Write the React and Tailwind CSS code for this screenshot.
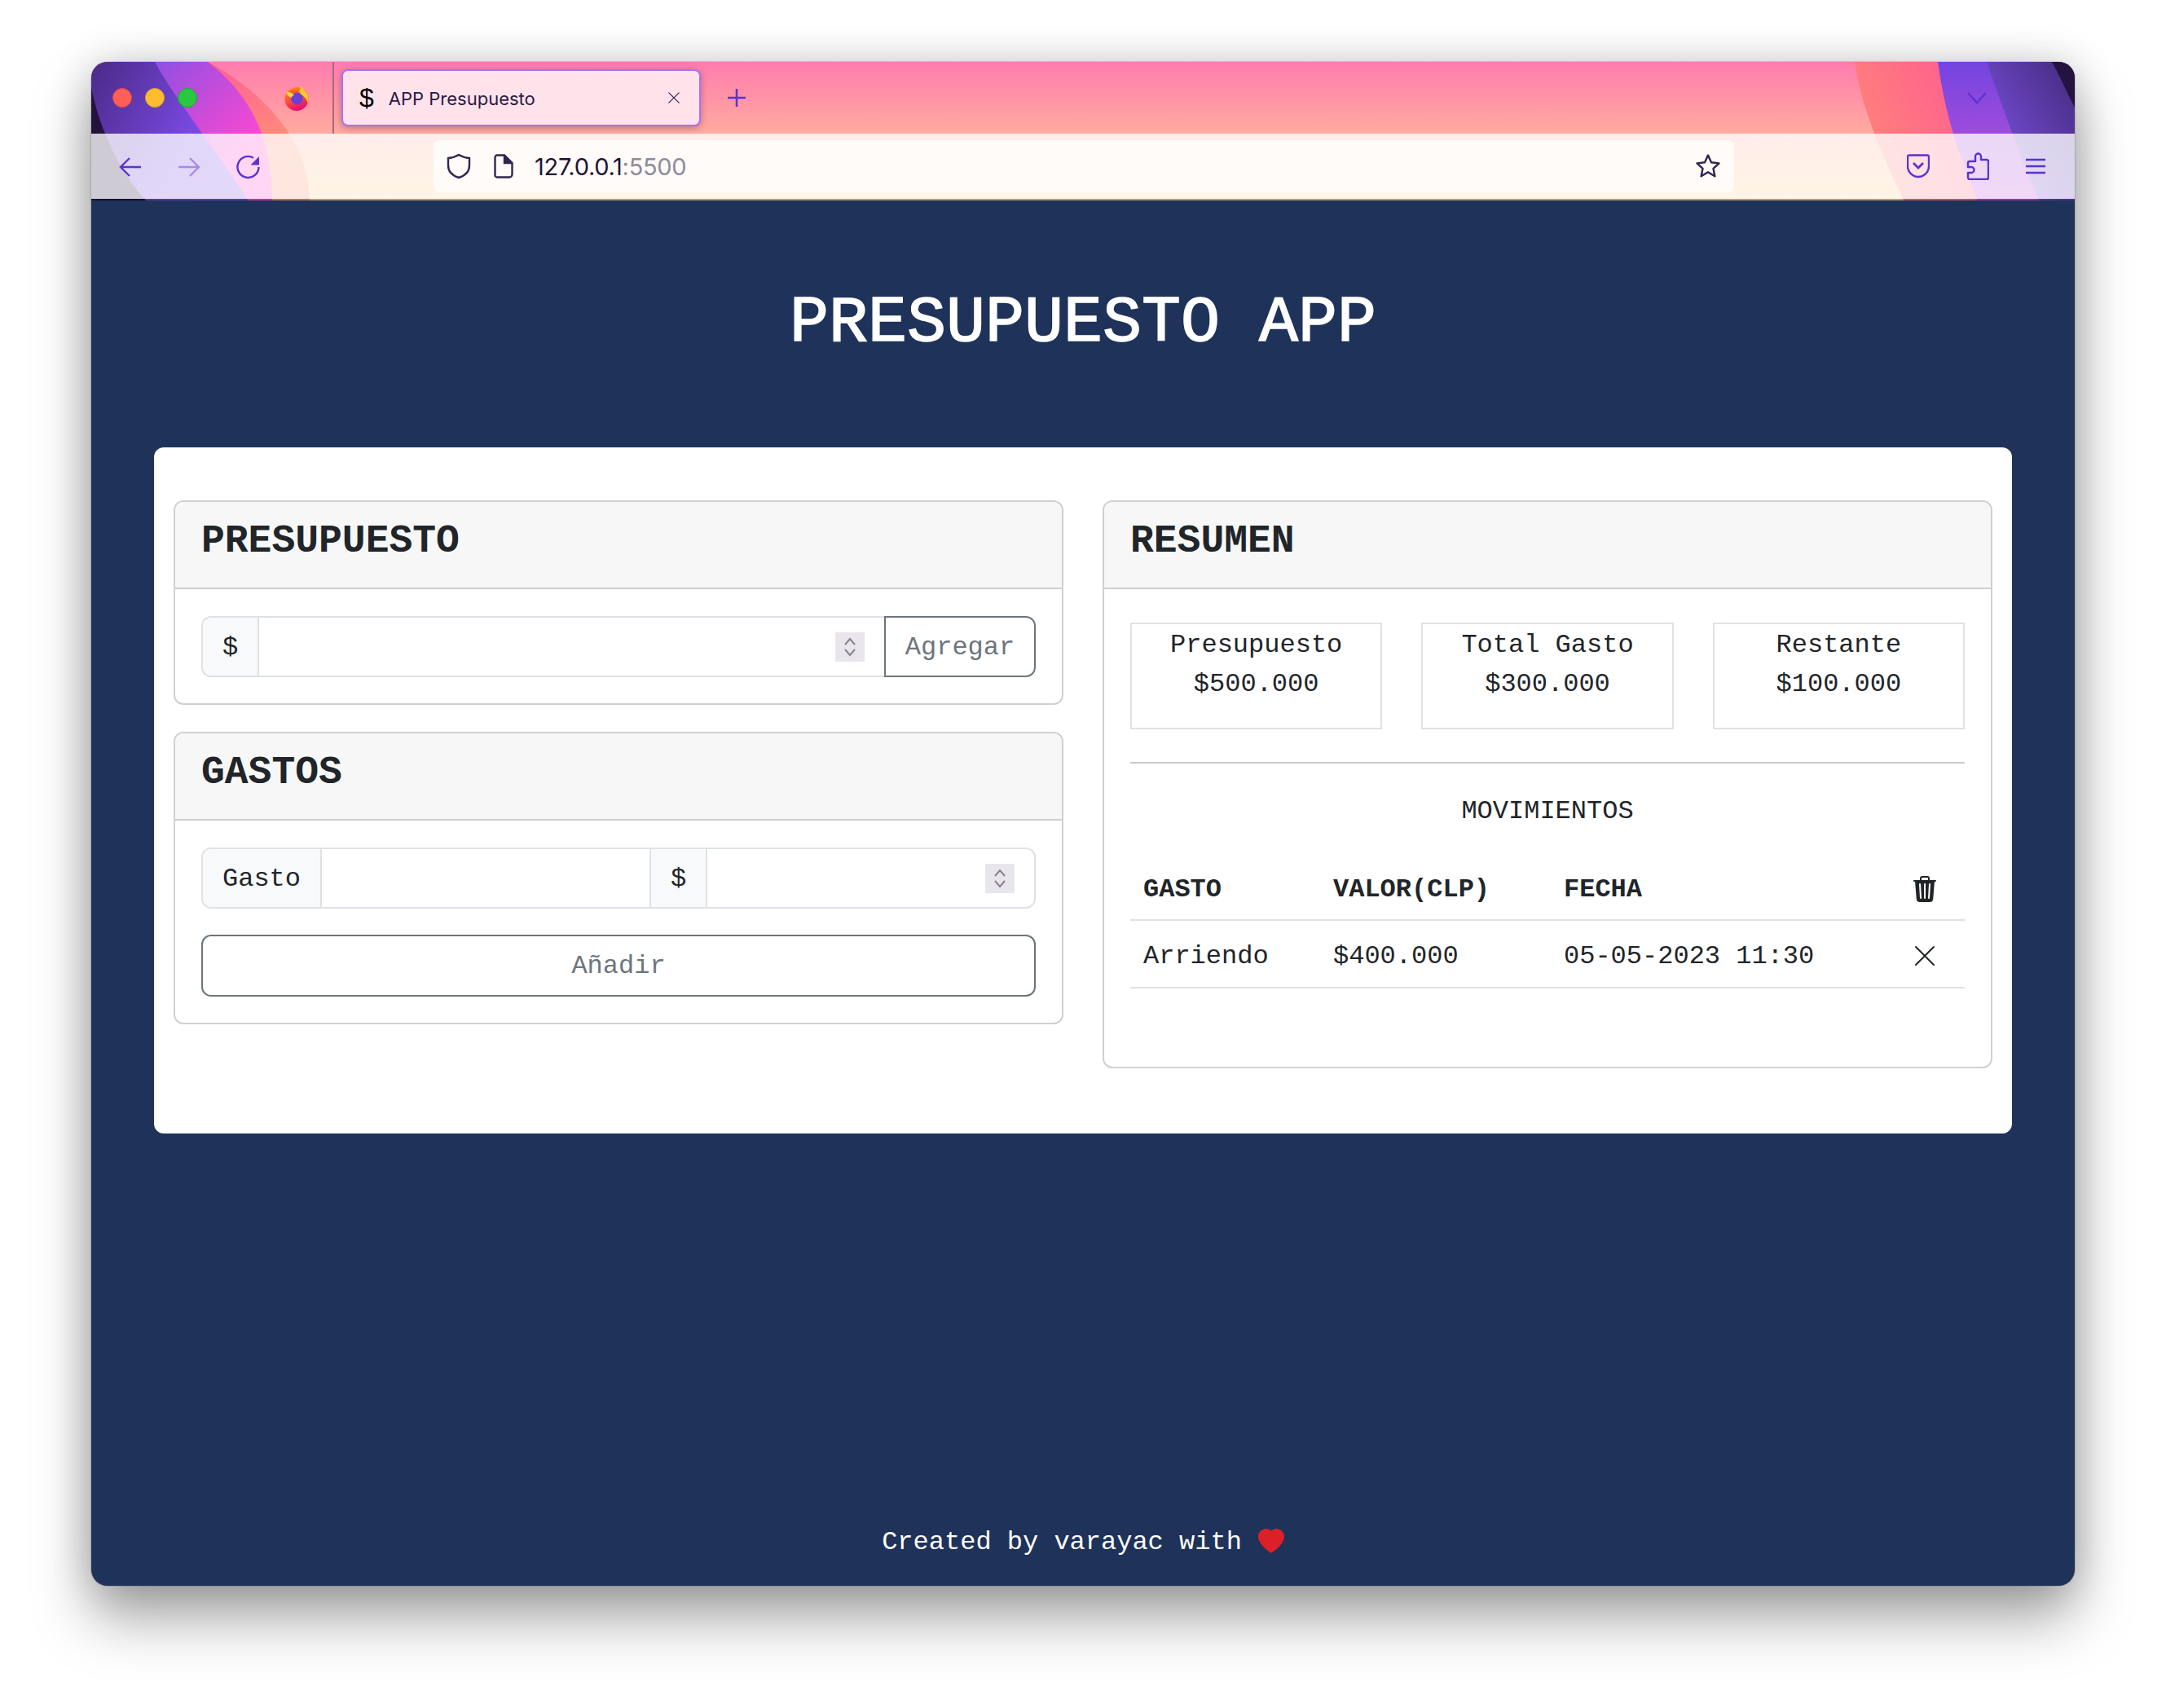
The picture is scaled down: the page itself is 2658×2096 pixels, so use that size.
import { BsTrash3Fill, BsXLg, BsHeartFill } from "react-icons/bs";

const MONO = "font-['Liberation_Mono',monospace]";

function Chrome() {
  return (
    <div className="relative h-[170px] shrink-0 overflow-hidden">
      {/* theme artwork behind the tab strip and toolbar */}
      <svg className="absolute inset-0" width="2434" height="170" viewBox="0 0 2434 170">
        <defs>
          <linearGradient id="base" x1="0" y1="0" x2="0" y2="1">
            <stop offset="0" stopColor="#ff7cae" />
            <stop offset="0.52" stopColor="#ffab9e" />
            <stop offset="1" stopColor="#ffd08a" />
          </linearGradient>
          <linearGradient id="leftBand" x1="0" y1="0" x2="1" y2="0.5">
            <stop offset="0" stopColor="#4a2a86" />
            <stop offset="0.7" stopColor="#7848e0" />
            <stop offset="1" stopColor="#7c4ee6" />
          </linearGradient>
          <linearGradient id="leftMag" x1="0.3" y1="0" x2="0.95" y2="0.55">
            <stop offset="0" stopColor="#8a50e4" />
            <stop offset="1" stopColor="#ff48d0" />
          </linearGradient>
          <linearGradient id="leftPink" x1="0.5" y1="0" x2="1" y2="0.6">
            <stop offset="0" stopColor="#ff5a9a" />
            <stop offset="1" stopColor="#ff9474" />
          </linearGradient>
          <linearGradient id="rightPink" x1="0" y1="0.6" x2="1" y2="0.3">
            <stop offset="0" stopColor="#ff8478" />
            <stop offset="1" stopColor="#ff45a0" />
          </linearGradient>
          <linearGradient id="rightPurple" x1="0" y1="0" x2="0" y2="1">
            <stop offset="0" stopColor="#7444e0" />
            <stop offset="0.5" stopColor="#9c4cdc" />
            <stop offset="1" stopColor="#c050d8" />
          </linearGradient>
          <linearGradient id="rightDark" x1="1" y1="0" x2="0" y2="1">
            <stop offset="0" stopColor="#432a7c" />
            <stop offset="1" stopColor="#8558f2" />
          </linearGradient>
          <linearGradient id="foxBody" x1="0" y1="0" x2="0.4" y2="1">
            <stop offset="0" stopColor="#ff9a1f" />
            <stop offset="0.6" stopColor="#ff4a35" />
            <stop offset="1" stopColor="#e8126c" />
          </linearGradient>
        </defs>
        <rect width="2434" height="170" fill="url(#base)" />
        <path d="M143 0C200 30 268 90 268 170H0V0Z" fill="url(#leftPink)" />
        <path d="M143 0C175 25 222 70 222 170H0V0Z" fill="url(#leftMag)" />
        <path d="M78 0C100 40 150 105 193 170H0V0Z" fill="url(#leftBand)" />
        <path d="M0 30C6 68 30 130 67 170H0Z" fill="#24123f" />
        <path d="M2164 0C2170 42 2185 88 2224 170H2434V0Z" fill="url(#rightPink)" />
        <path d="M2266 0C2272 40 2280 88 2315 170H2434V0Z" fill="url(#rightPurple)" />
        <path d="M2326 0C2338 34 2356 88 2390 170H2434V0Z" fill="url(#rightDark)" />
        <path d="M2406 0C2416 18 2425 38 2434 56V0Z" fill="#24123f" />
      </svg>

      <div className="relative flex h-[88px] items-start">
        <div className="flex h-[88px] w-[298px] shrink-0 items-center border-r-2 border-[#a8697c]">
          <div className="ml-[26px] flex gap-4">
            <span className="h-6 w-6 rounded-full border border-[#e0483e] bg-[#ff5f57]" />
            <span className="h-6 w-6 rounded-full border border-[#dfa123] bg-[#febc2e]" />
            <span className="h-6 w-6 rounded-full border border-[#1aab29] bg-[#28c840]" />
          </div>
          <svg className="ml-[107px]" width="30" height="32" viewBox="0 0 30 32">
            <circle cx="15" cy="17.500" r="14.500" fill="url(#foxBody)" />
            <path d="M20 0c1 4 4 6 7 10 3 4 3 9 2 13-2-7-7-11-12-13 2-3 3-6 3-10Z" fill="#ffc930" />
            <circle cx="15.500" cy="17" r="7.500" fill="#6f3fd4" />
            <path d="M5 9c4-3 10-4 15 1-4-1-8-1-10 1Z" fill="#ff5a1f" />
            <path d="M2 9c4-1 8 1 10 4-2 0-3 1-3 3-3-1-6-3-7-7Z" fill="#ffd040" />
          </svg>
        </div>
        <div className="ml-[9px] mt-[9px] flex h-[70px] w-[441px] shrink-0 items-center rounded-lg border-2 border-[#a873f5] bg-[#ffe2ea] shadow-[0_2px_8px_rgba(70,20,60,0.35)]">
          <span className="ml-5 font-['Liberation_Sans',sans-serif] text-[32px] leading-none text-black">$</span>
          <span className="ml-[18px] flex-1 pt-[2px] font-['Inter',sans-serif] text-[22px] text-[#2a1a47]">APP Presupuesto</span>
          <BsXLg className="mr-[22px] text-[18px] text-[#2a1a47]" />
        </div>
        <svg className="ml-[32px] mt-[32px]" width="24" height="24" viewBox="0 0 24 24" stroke="#5b33d0" strokeWidth="2.5">
          <path d="M12 1v22M1 12h22" />
        </svg>
        <svg className="ml-[1496px] mt-[36px]" width="28" height="16" viewBox="0 0 28 16" fill="none" stroke="#5b33d0" strokeWidth="2.4">
          <path d="M3 2l11 12L25 2" />
        </svg>
      </div>

      <div className="relative flex h-[80px] items-center bg-white/78">
        <svg className="ml-[34px] mt-[2px]" width="28" height="28" viewBox="0 0 28 28" fill="none" stroke="#5b33d0" strokeWidth="2.4">
          <path d="M27 14H2M13 3L2 14l11 11" />
        </svg>
        <svg className="ml-[44px] mt-[2px]" width="28" height="28" viewBox="0 0 28 28" fill="none" stroke="#a78be8" strokeWidth="2.4">
          <path d="M1 14h25M15 3l11 11-11 11" />
        </svg>
        <svg className="ml-[44px] mt-[2px]" width="30" height="30" viewBox="0 0 30 30" fill="none" stroke="#5b33d0" strokeWidth="2.4">
          <path d="M27.500 15a13 13 0 1 1-6.500-11.300" />
          <path d="M28 2v10.500H17.500z" fill="#5b33d0" stroke="none" />
        </svg>
        <div className="ml-[212px] flex h-16 w-[1596px] items-center rounded-lg bg-[#fffbf8]">
          <svg className="ml-[15px]" width="32" height="32" viewBox="0 0 32 32" fill="none" stroke="#32254f" strokeWidth="2.4">
            <path d="M16 2c4 2.500 8 3.600 13 4v9c0 8-5 12.500-13 15C8 27.500 3 23 3 15V6c5-.4 9-1.500 13-4Z" />
          </svg>
          <svg className="ml-[27px]" width="24" height="30" viewBox="0 0 24 30" fill="none" stroke="#32254f" strokeWidth="2.4">
            <path d="M4 1.500h9l9.500 9.500v14a3.500 3.500 0 0 1-3.500 3.500H4A2.500 2.500 0 0 1 1.500 26V4A2.500 2.500 0 0 1 4 1.500Z" />
            <path d="M13 1.500v9.500h9.500" fill="#32254f" />
          </svg>
          <span className="ml-[26px] flex-1 pt-[2px] font-['Inter',sans-serif] text-[29px] tracking-[-0.3px] text-[#1f1338]">
            127.0.0.1<span className="text-[#8f8a9c]">:5500</span>
          </span>
          <svg className="mr-[16px]" width="32" height="32" viewBox="0 0 32 32" fill="none" stroke="#32254f" strokeWidth="2.4" strokeLinejoin="round">
            <path d="M16 2.500l4 8.800 9.500 1.100-7 6.500 1.900 9.400L16 23.200 7.600 28.300l1.900-9.400-7-6.500 9.500-1.100Z" />
          </svg>
        </div>
        <svg className="ml-[212px]" width="28" height="30" viewBox="0 0 28 30" fill="none" stroke="#5b33d0" strokeWidth="2.4">
          <path d="M3 1.500h22a2 2 0 0 1 2 2V15c0 7-6 13-13 13S1 22 1 15V3.500a2 2 0 0 1 2-2Z" />
          <path d="M8 11l6 6 6-6" strokeWidth="2.800" />
        </svg>
        <svg className="ml-[45px]" width="28" height="34" viewBox="0 0 28 34" fill="none" stroke="#5b33d0" strokeWidth="2.4" strokeLinejoin="round">
          <path d="M11 9V5a3.500 3.500 0 0 1 7 0v4h7a2 2 0 0 1 2 2v20a2 2 0 0 1-2 2H4a2 2 0 0 1-2-2v-6h4a3.500 3.500 0 0 0 0-7H2v-5a2 2 0 0 1 2-2h7Z" />
        </svg>
        <svg className="ml-[45px]" width="24" height="20" viewBox="0 0 24 20" stroke="#5b33d0" strokeWidth="2.4">
          <path d="M0 2h24M0 10h24M0 18h24" />
        </svg>
      </div>
      <div className="relative h-[2px] bg-black/25" />
    </div>
  );
}

function Card({ title, className = "", children }) {
  return (
    <section className={`rounded-xl border-2 border-[#d0d0d0] bg-white ${className}`}>
      <div className="h-[107px] rounded-t-[10px] border-b-2 border-[#d0d0d0] bg-[#f7f7f7] px-8 pt-[19px]">
        <h2 className="text-[48px] font-bold leading-[58px] text-[#212529]">{title}</h2>
      </div>
      {children}
    </section>
  );
}

function Addon({ children, className = "" }) {
  return <span className={`flex items-center bg-[#f8f9fa] px-6 pt-[2px] text-[#212529] ${className}`}>{children}</span>;
}

function Spinner() {
  return (
    <div className="flex h-9 w-9 flex-col items-center justify-center gap-1 bg-[#e8e6ec]">
      <svg width="16" height="10" viewBox="0 0 16 10" fill="none" stroke="#85828f" strokeWidth="2">
        <path d="M2 9l6-7 6 7" />
      </svg>
      <svg width="16" height="10" viewBox="0 0 16 10" fill="none" stroke="#85828f" strokeWidth="2">
        <path d="M2 1l6 7 6-7" />
      </svg>
    </div>
  );
}

function Stat({ label, value }) {
  return (
    <div className="h-[131px] border-2 border-[#dee2e6] pt-[2px] text-center text-[32px] leading-[48px] text-[#212529]">
      <p>{label}</p>
      <p>{value}</p>
    </div>
  );
}

export default function App() {
  return (
    <div className={`${MONO} h-[2096px] w-[2658px] bg-white pl-[112px] pt-[76px]`}>
      <div className="flex h-[1870px] w-[2434px] flex-col overflow-hidden rounded-[20px] bg-[#1f3259] shadow-[0_0_0_1px_rgba(0,0,0,0.12),0_40px_70px_rgba(0,0,0,0.35),0_0_50px_rgba(0,0,0,0.18)]">
        <Chrome />
        <main className="flex flex-1 flex-col">
          <h1 className="mt-[103px] mb-[104px] text-center text-[80px] leading-[96px] text-white [-webkit-text-stroke:1.5px_white]">PRESUPUESTO APP</h1>
          <div className="mx-[77px] grid h-[842px] grid-cols-2 items-start gap-x-12 rounded-xl bg-white pl-[24px] pr-[24px] pt-[65px]">
            <div className="flex flex-col gap-[33px]">
              <Card title="PRESUPUESTO">
                <div className="px-8 pb-8 pt-[33px] text-[32px]">
                  <div className="flex h-[75px]">
                    <div className="flex flex-1 rounded-l-xl border-2 border-r-0 border-[#dee2e6]">
                      <Addon className="rounded-l-[10px] border-r-2 border-[#dee2e6]">$</Addon>
                      <div className="flex flex-1 items-center justify-end pr-6">
                        <Spinner />
                      </div>
                    </div>
                    <button className="w-[186px] rounded-r-xl border-2 border-[#6c757d] pt-[2px] text-[#6c757d]">Agregar</button>
                  </div>
                </div>
              </Card>
              <Card title="GASTOS">
                <div className="flex flex-col gap-8 px-8 pb-8 pt-[33px] text-[32px]">
                  <div className="flex h-[75px] rounded-xl border-2 border-[#dee2e6]">
                    <Addon className="w-[146px] rounded-l-[10px] border-r-2 border-[#dee2e6]">Gasto</Addon>
                    <div className="w-[402px]" />
                    <Addon className="border-x-2 border-[#dee2e6]">$</Addon>
                    <div className="flex flex-1 items-center justify-end pr-6">
                      <Spinner />
                    </div>
                  </div>
                  <button className="h-[76px] rounded-xl border-2 border-[#6c757d] pt-[2px] text-[#6c757d]">Añadir</button>
                </div>
              </Card>
            </div>

            <Card title="RESUMEN" className="h-[697px]">
              <div className="px-8 pt-[41px] text-[32px] text-[#212529]">
                <div className="grid grid-cols-3 gap-x-12">
                  <Stat label="Presupuesto" value="$500.000" />
                  <Stat label="Total Gasto" value="$300.000" />
                  <Stat label="Restante" value="$100.000" />
                </div>
                <hr className="mt-[40px] border-t-2 border-[#c9c9c9]" />
                <p className="mt-[35px] text-center leading-[48px]">MOVIMIENTOS</p>
                <div className="mt-[45px] grid h-[65px] grid-cols-[233px_283px_1fr_98px] items-center border-b-2 border-[#dee2e6] pb-[10px] font-bold">
                  <span className="pl-4">GASTO</span>
                  <span className="pl-4">VALOR(CLP)</span>
                  <span className="pl-4">FECHA</span>
                  <span className="-mt-[2px] flex justify-center text-[32px]"><BsTrash3Fill /></span>
                </div>
                <div className="grid h-[83px] grid-cols-[233px_283px_1fr_98px] items-center border-b-2 border-[#dee2e6] pt-[6px]">
                  <span className="pl-4">Arriendo</span>
                  <span className="pl-4">$400.000</span>
                  <span className="whitespace-nowrap pl-4">05-05-2023 11:30</span>
                  <span className="-mt-[2px] flex justify-center text-[32px]"><BsXLg /></span>
                </div>
              </div>
            </Card>
          </div>
          <footer className="mt-auto mb-[29px] flex items-center justify-center gap-5 text-[32px] leading-[48px] text-white">
            <span>Created by varayac with</span>
            <BsHeartFill className="mb-[3px] text-[32px] text-[#dc2027]" />
          </footer>
        </main>
      </div>
    </div>
  );
}
